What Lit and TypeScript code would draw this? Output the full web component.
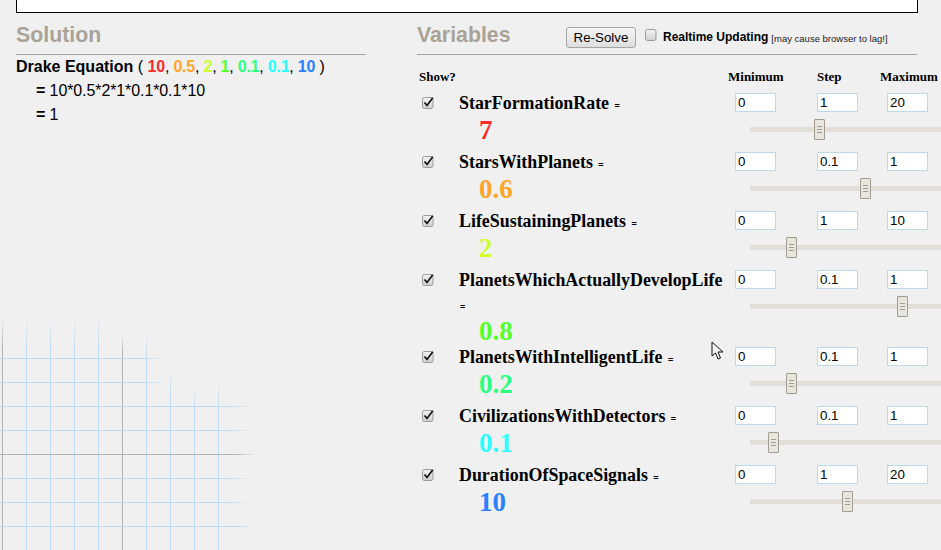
import { LitElement, html, css, svg } from "lit";
import { customElement } from "lit/decorators.js";

const vars = [
  { name: "StarFormationRate", value: "7", color: "#ff2a2a", min: "0", step: "1", max: "20", pct: 0.35 },
  { name: "StarsWithPlanets", value: "0.6", color: "#ffa52a", min: "0", step: "0.1", max: "1", pct: 0.6 },
  { name: "LifeSustainingPlanets", value: "2", color: "#ccff2a", min: "0", step: "1", max: "10", pct: 0.2 },
  { name: "PlanetsWhichActuallyDevelopLife", value: "0.8", color: "#55ff2a", min: "0", step: "0.1", max: "1", pct: 0.8 },
  { name: "PlanetsWithIntelligentLife", value: "0.2", color: "#2aff80", min: "0", step: "0.1", max: "1", pct: 0.2 },
  { name: "CivilizationsWithDetectors", value: "0.1", color: "#2affff", min: "0", step: "0.1", max: "1", pct: 0.1 },
  { name: "DurationOfSpaceSignals", value: "10", color: "#2a80ff", min: "0", step: "1", max: "20", pct: 0.5 },
];

const args = [
  ["10", "#ff2a2a"], ["0.5", "#ffa52a"], ["2", "#ccff2a"], ["1", "#55ff2a"],
  ["0.1", "#2aff80"], ["0.1", "#2affff"], ["10", "#2a80ff"],
];

const vLines: [number, number, number, boolean][] = [
  [2.5, 318, 348, true], [26.5, 320, 348, false], [50.5, 318, 345, false], [74.5, 320, 348, false],
  [98.5, 316, 345, false], [122.5, 334, 352, true], [146.5, 334, 358, false], [170.5, 370, 392, false],
  [194.5, 386, 406, false], [218.5, 382, 406, false],
];
const hLines: [number, number, number, boolean][] = [
  [358.5, 146, 164, false], [382.5, 146, 168, false], [406.5, 225, 260, false], [430.5, 225, 258, false],
  [454.5, 235, 256, true], [478.5, 228, 254, false], [502.5, 228, 252, false], [526.5, 240, 252, false],
];

const BLUE = "#bddcf2";
const GRAY = "#b2b2b2";

function grid() {
  const grad = (id: string, c: string, horiz: boolean) => svg`
    <linearGradient id=${id} x1="0" y1=${horiz ? 0 : 1} x2=${horiz ? 1 : 0} y2="0">
      <stop offset="0" stop-color=${c}></stop>
      <stop offset="1" stop-color=${c} stop-opacity="0"></stop>
    </linearGradient>`;
  return html`<svg class="grid" width="270" height="240" viewBox="0 310 270 240">
    <defs>
      ${grad("vb", BLUE, false)}${grad("vg", GRAY, false)}${grad("hb", BLUE, true)}${grad("hg", GRAY, true)}
    </defs>
    ${vLines.map(([x, y0, y1, g]) => svg`
      <rect x=${x - 0.5} y=${y0} width="1" height=${y1 - y0} fill=${g ? "url(#vg)" : "url(#vb)"}></rect>
      <rect x=${x - 0.5} y=${y1} width="1" height=${550 - y1} fill=${g ? GRAY : BLUE}></rect>`)}
    ${hLines.map(([y, x0, x1, g]) => svg`
      <rect x="0" y=${y - 0.5} width=${x0} height="1" fill=${g ? GRAY : BLUE}></rect>
      <rect x=${x0} y=${y - 0.5} width=${x1 - x0} height="1" fill=${g ? "url(#hg)" : "url(#hb)"}></rect>`)}
  </svg>`;
}

function check(checked: boolean) {
  return html`<svg class="cb" width="13" height="13" viewBox="0 0 13 13">
    <defs><linearGradient id="cbg" x1="0" y1="0" x2="0" y2="1">
      <stop offset="0" stop-color="#f4f4f4"></stop><stop offset="1" stop-color="#cfcfcf"></stop>
    </linearGradient></defs>
    <rect x="0.5" y="0.5" width="10.5" height="11" rx="2" fill="url(#cbg)" stroke="#9a9a9a"></rect>
    ${checked
      ? svg`<path d="M2.5 5.5 L5 8.5 L10.8 0.8" fill="none" stroke="#111" stroke-width="1.7"></path>`
      : null}
  </svg>`;
}

@customElement("app-root")
export class AppRoot extends LitElement {
  static styles = css`
    :host {
      display: block;
      position: relative;
      width: 941px;
      height: 550px;
      overflow: hidden;
      background: #f0f0f0;
      font-family: "Liberation Sans", Arial, sans-serif;
      color: #000;
    }
    .grid { position: absolute; left: 0; top: 310px; }
    .page { position: relative; padding: 0 0 0 16px; }
    .top {
      width: 900px; height: 12px; background: #fff;
      border: 1px solid #000; border-width: 0 1px 1px 1px;
    }
    .cols { display: flex; gap: 51px; padding-top: 10px; }
    .left { width: 350px; flex: none; }
    .right { width: 500px; flex: none; }
    .head {
      box-sizing: border-box;
      display: flex; align-items: center; height: 32px; padding-bottom: 6px;
      border-bottom: 1px solid #a9a297;
      color: #a9a297; font-size: 21.3px; font-weight: bold;
    }
    .head .title { width: 149px; }
    .btn {
      box-sizing: border-box; width: 70px; height: 21px; padding: 0; margin-top: 3px;
      display: flex; align-items: center; justify-content: center;
      background: linear-gradient(#f6f6f6, #dedede);
      border: 1px solid #a6a6a6; border-radius: 3px;
      color: #000; font-size: 13.33px; font-weight: normal;
    }
    .rt { display: flex; align-items: center; margin: 3px 0 0 9px; color: #000; font-weight: bold; font-size: 12px; }
    .rt .cb { margin: -3px 5px 0 0; }
    .rt small { font-weight: normal; font-size: 9.5px; margin-left: 3px; padding-top: 2px; color: #222; }
    .eq { font-size: 16px; line-height: 24px; }
    .eq .line { padding-left: 20px; letter-spacing: -0.1px; }
    .args { letter-spacing: -0.22px; }
    b { font-weight: bold; }
    .colhead {
      box-sizing: border-box;
      display: grid; grid-template-columns: 311px 89px 63px auto;
      font: bold 13px "Liberation Serif", serif;
      height: 36px; align-items: center; padding-top: 7px; white-space: nowrap;
    }
    .colhead span:first-child { padding-left: 2px; }
    .row {
      display: grid; grid-template-columns: 42px 276px 600px;
      min-height: 59px; align-items: start;
    }
    .row .cb { margin: 6px 0 0 5px; display: block; }
    .namecell { padding-right: 8px; }
    .name { font: bold 17.9px/24px "Liberation Serif", serif; }
    .name .e { font: bold 9px "Liberation Sans", sans-serif; margin-left: 1px; }
    .val { font: bold 27px/27px "Liberation Serif", serif; padding: 2px 0 0 20px; }
    .ctrl { position: relative; }
    .inputs { display: grid; grid-template-columns: 82px 70px 41px; padding-top: 2px; }
    input {
      box-sizing: border-box; width: 41px; height: 19px; margin: 0; padding: 0 2px;
      background: #fff; border: 1px solid #bcd9ea; border-radius: 0; outline: none;
      font: 13.33px "Liberation Sans", sans-serif; color: #000;
    }
    .slider { position: relative; width: 300px; height: 5px; margin: 15px 0 0 15px; background: #e3dfd8; }
    .thumb {
      position: absolute; top: -8px; box-sizing: border-box; width: 11px; height: 21px;
      background: #e8e5df; border: 1px solid #a29c91; border-radius: 1px;
      display: flex; flex-direction: column; justify-content: center; align-items: center; gap: 2px;
    }
    .thumb i { display: block; width: 5px; height: 1px; background: #a29c91; }
    .cursor { position: absolute; left: 711px; top: 341px; }
  `;

  render() {
    return html`
      ${grid()}
      <div class="page">
        <div class="top"></div>
        <div class="cols">
          <section class="left">
            <div class="head"><span>Solution</span></div>
            <div class="eq">
              <div>
                <b>Drake Equation</b> (
                <span class="args">${args.map(([v, c], i) => html`<b style="color:${c}">${v}</b>${i < args.length - 1 ? ", " : " "}`)}</span>)
              </div>
              <div class="line"><b>=</b> 10*0.5*2*1*0.1*0.1*10</div>
              <div class="line"><b>=</b> 1</div>
            </div>
          </section>
          <section class="right">
            <div class="head">
              <span class="title">Variables</span>
              <span class="btn">Re-Solve</span>
              <span class="rt">${check(false)}Realtime Updating <small>[may cause browser to lag!]</small></span>
            </div>
            <div class="colhead"><span>Show?</span><span>Minimum</span><span>Step</span><span>Maximum</span></div>
            ${vars.map(
              (v) => html`<div class="row">
                <div>${check(true)}</div>
                <div class="namecell">
                  <div class="name">${v.name} <span class="e">=</span></div>
                  <div class="val" style="color:${v.color}">${v.value}</div>
                </div>
                <div class="ctrl">
                  <div class="inputs">
                    <input .value=${v.min} /><input .value=${v.step} /><input .value=${v.max} />
                  </div>
                  <div class="slider">
                    <div class="thumb" style="left:${v.pct * 184 - 0.5}px"><i></i><i></i><i></i></div>
                  </div>
                </div>
              </div>`
            )}
          </section>
        </div>
      </div>
      <svg class="cursor" width="14" height="20" viewBox="0 0 14 20">
        <path d="M1 1 L1 15 L4.5 12 L7 18 L9.5 17 L7 11 L12 11 Z" fill="#f4f4f4" stroke="#111" stroke-width="1"></path>
      </svg>
    `;
  }
}
